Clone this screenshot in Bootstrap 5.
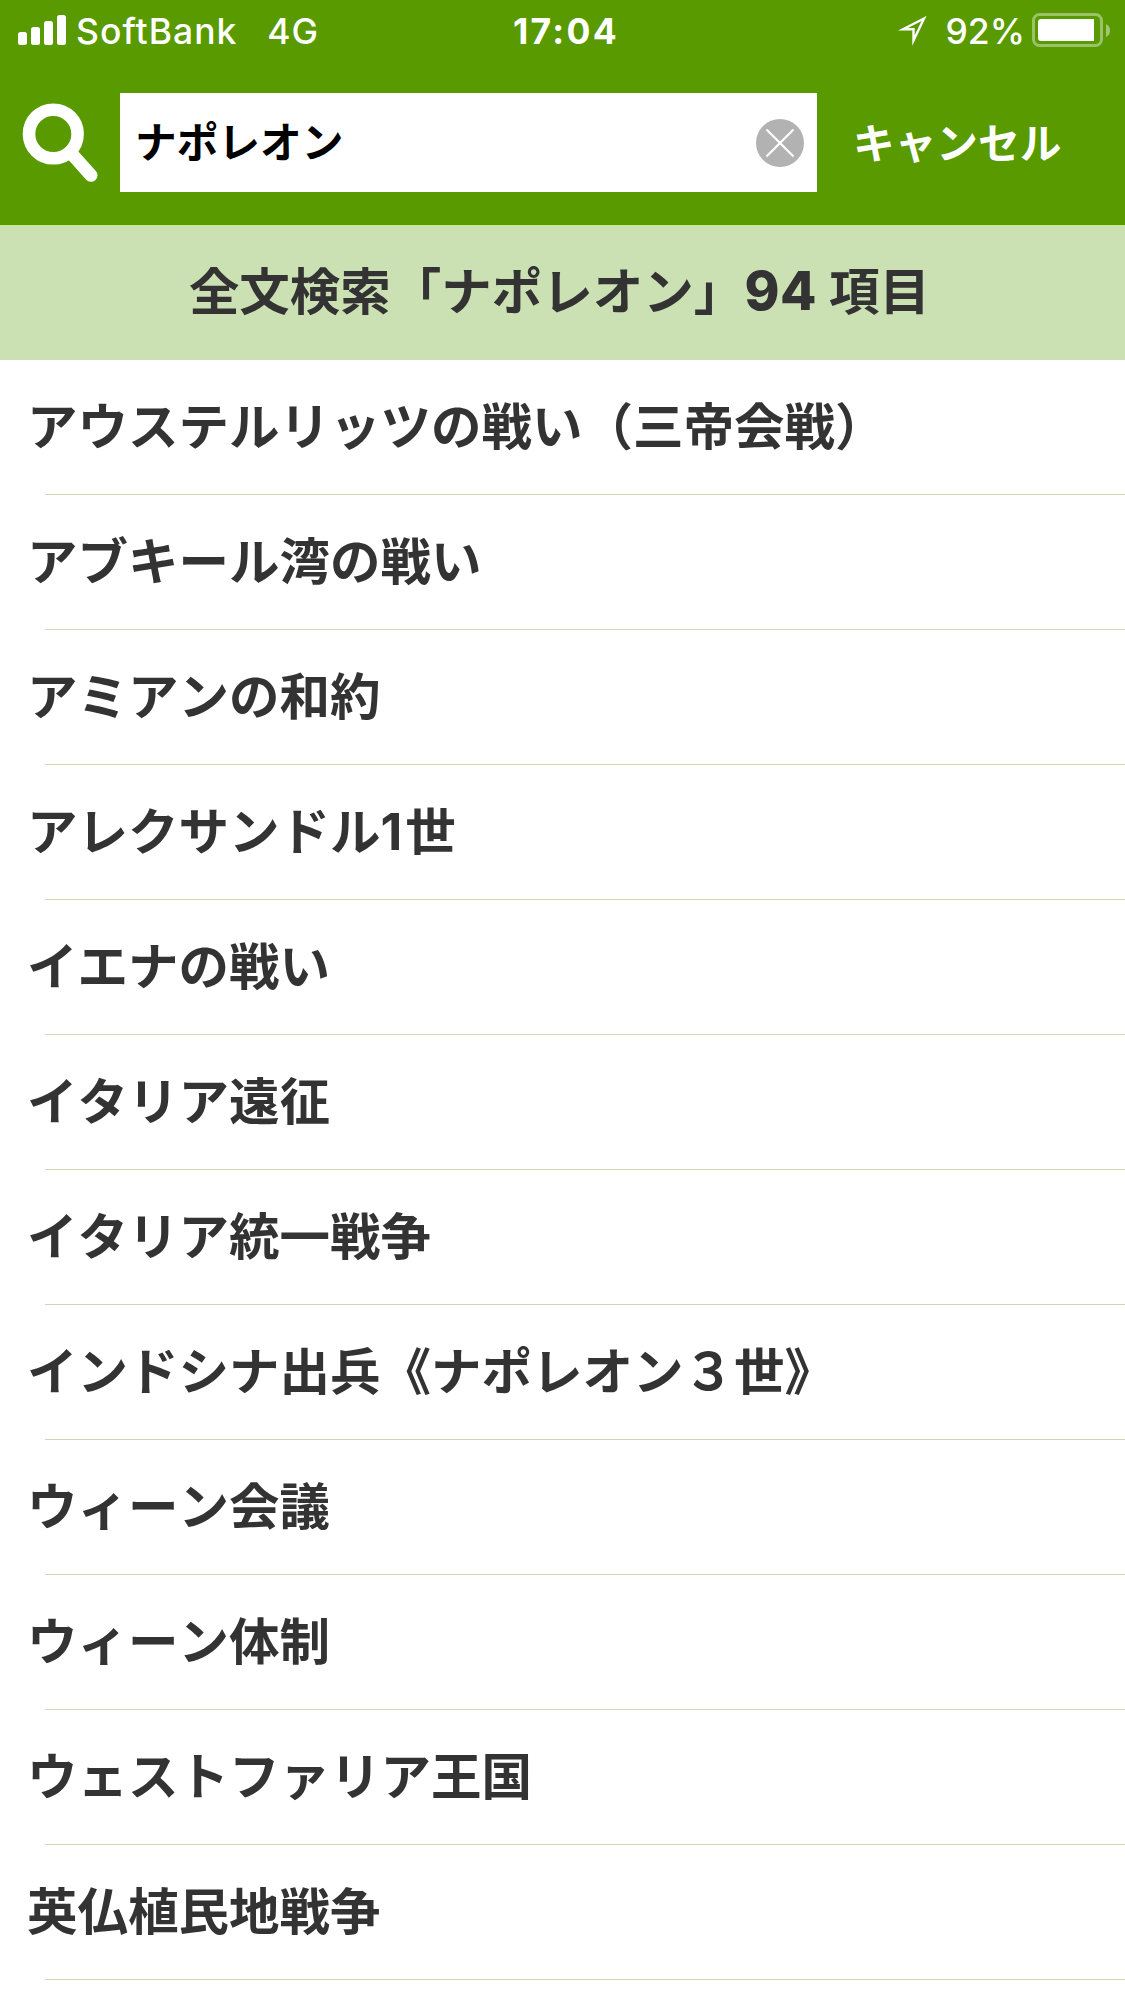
<!DOCTYPE html>
<html lang="ja">
<head>
<meta charset="utf-8">
<meta name="viewport" content="width=device-width, initial-scale=1">
<title>全文検索</title>
<link href="https://cdn.jsdelivr.net/npm/bootstrap@5.3.0/dist/css/bootstrap.min.css" rel="stylesheet">
<style>
  body { font-family: Inter, "Noto Sans CJK JP", sans-serif; color: #333; background: #fff; height: 2001px; overflow: hidden; }
  .app-header { background: #589a00; height: 225px; }
  .status-bar { height: 60px; padding: 0 15px 0 18px; font-size: 35.5px; font-weight: 500; line-height: 56px; }
  .status-bar span, .clock { padding-top: 4px; }
  .status-side { flex: 1 1 0; }
  .carrier { margin-left: 10px; letter-spacing: 1px; }
  .network { margin-left: 30px; letter-spacing: .8px; }
  .clock { font-weight: 700; letter-spacing: 2.3px; padding-left: 4px; }
  .percent { margin-left: 18px; margin-right: 7px; }
  .search-bar { padding: 33px 0 0 20px; }
  .search-icon { margin: 8px 20px 0 0; }
  .search-field { width: 697px; height: 99px; }
  .search-field .form-control { font: 700 41.7px/60px Inter, "Noto Sans CJK JP", sans-serif; color: #000; padding: 0 80px 6px 15px; font-kerning: none; }
  .clear-btn { right: 13px; top: 25.5px; line-height: 0; }
  .cancel-btn { font: 700 41.7px/99px Inter, "Noto Sans CJK JP", sans-serif; margin: 2px 0 0 36px; font-kerning: none; }
  .result-title { height: 135px; background: #cce1b3; border-top: 1px solid #c1eb8c; font-size: 50.5px; font-weight: 700; line-height: 131px; padding-right: 6px; font-kerning: none; }
  .hit-count { font-size: 53px; font-weight: 800; letter-spacing: .6px; }
  .numeral { letter-spacing: 3px; }
  .results .list-group-item { height: 135px; padding: 0 0 0 27px; font-size: 50.5px; font-weight: 700; line-height: 133px; color: #333; border: 0; font-kerning: none; background: linear-gradient(#d0d7b8, #d0d7b8) 45px 134px / 100% 1px no-repeat; }
</style>
</head>
<body>
<header class="app-header text-white">
  <div class="status-bar d-flex align-items-center">
    <div class="status-side d-flex align-items-center">
      <svg width="48" height="60" viewBox="0 0 48 60" fill="#fff"><rect y="32" width="9" height="13" rx="2.5"/><rect x="13" y="27" width="9" height="18" rx="2.5"/><rect x="26" y="21" width="9" height="24" rx="2.5"/><rect x="39" y="15" width="9" height="30" rx="2.5"/></svg>
      <span class="carrier">SoftBank</span><span class="network">4G</span>
    </div>
    <div class="clock">17:04</div>
    <div class="status-side d-flex align-items-center justify-content-end">
      <svg width="32" height="60" viewBox="0 0 32 60"><path d="M28 18.5 L7 29.2 H17.5 V40.5 Z" fill="none" stroke="#fff" stroke-width="2.4" stroke-miterlimit="10"/></svg>
      <span class="percent">92%</span>
      <svg width="78" height="60" viewBox="0 0 78 60"><rect x="1.5" y="14.5" width="68" height="31" rx="6" fill="none" stroke="#fff" stroke-opacity=".4" stroke-width="3"/><path d="M9 19 H62 V41 H9 Q6 41 6 38 V22 Q6 19 9 19Z" fill="#fff"/><path d="M74 24 Q78 26 78 30.500 T74 37Z" fill="#fff" fill-opacity=".45"/></svg>
    </div>
  </div>
  <div class="search-bar d-flex align-items-start">
    <svg class="search-icon" width="80" height="84" viewBox="20 101 80 84" fill="none" stroke="#fff"><circle cx="53.3" cy="134" r="24.3" stroke-width="12.600"/><path d="M71 153 L91 175.300" stroke-width="13" stroke-linecap="round"/></svg>
    <div class="search-field position-relative">
      <input class="form-control h-100 border-0 rounded-0" type="text" value="ナポレオン" aria-label="検索">
      <button class="clear-btn btn p-0 border-0 position-absolute" type="button" aria-label="消去"><svg width="48" height="48" viewBox="0 0 48 48"><circle cx="24" cy="24" r="24" fill="#b2b2b2"/><path d="M10.500 10.500 L37.500 37.500 M37.500 10.500 L10.500 37.500" stroke="#fff" stroke-width="2.200"/></svg></button>
    </div>
    <button class="cancel-btn btn p-0 border-0 text-white" type="button">キャンセル</button>
  </div>
</header>
<main>
  <h1 class="result-title text-center m-0">全文検索「ナポレオン」<span class="hit-count">94</span> 項目</h1>
  <ul class="results list-group list-group-flush">
    <li class="list-group-item">アウステルリッツの戦い（三帝会戦）</li>
    <li class="list-group-item">アブキール湾の戦い</li>
    <li class="list-group-item">アミアンの和約</li>
    <li class="list-group-item">アレクサンドル<span class="numeral">1</span>世</li>
    <li class="list-group-item">イエナの戦い</li>
    <li class="list-group-item">イタリア遠征</li>
    <li class="list-group-item">イタリア統一戦争</li>
    <li class="list-group-item">インドシナ出兵《ナポレオン３世》</li>
    <li class="list-group-item">ウィーン会議</li>
    <li class="list-group-item">ウィーン体制</li>
    <li class="list-group-item">ウェストファリア王国</li>
    <li class="list-group-item">英仏植民地戦争</li>
  </ul>
</main>
<script src="https://cdn.jsdelivr.net/npm/bootstrap@5.3.0/dist/js/bootstrap.bundle.min.js"></script>
</body>
</html>
